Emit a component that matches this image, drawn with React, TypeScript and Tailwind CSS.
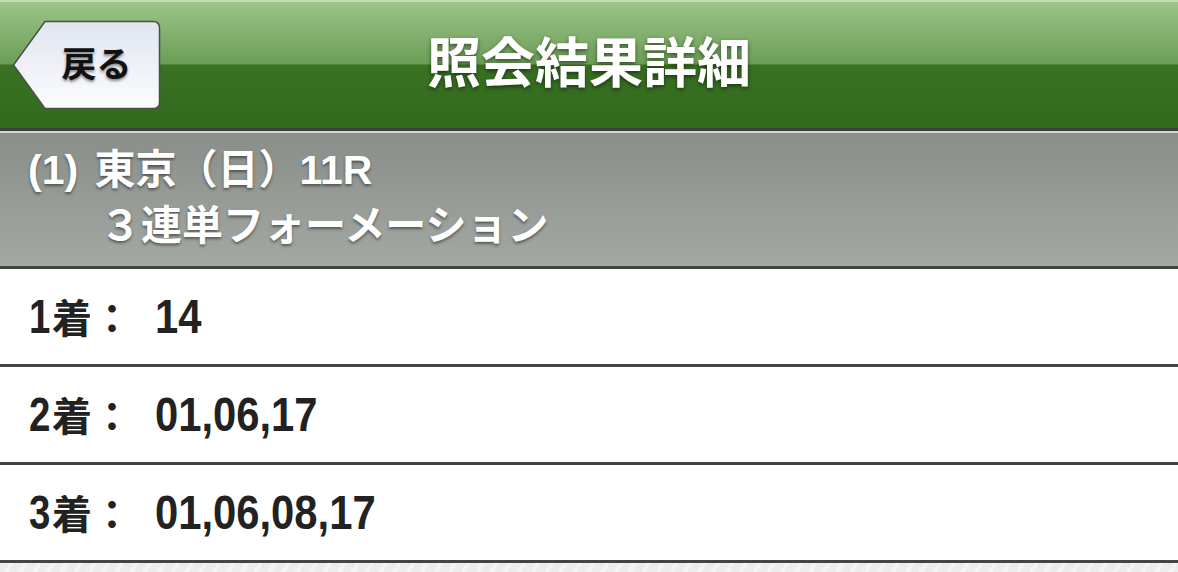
const font = { fontFamily: '"Liberation Sans", "Noto Sans CJK JP", sans-serif' };

const rows = [
  { place: "1", value: "14" },
  { place: "2", value: "01,06,17" },
  { place: "3", value: "01,06,08,17" },
];

function BackButton() {
  return (
    <button className="relative ml-[12px] h-[90px] w-[149px] cursor-pointer">
      <svg className="absolute inset-0" width="149" height="90" viewBox="0 0 149 90">
        <defs>
          <linearGradient id="backFill" x1="0" y1="0" x2="0" y2="1">
            <stop offset="0" stopColor="#dfe4ee" />
            <stop offset="1" stopColor="#fdfdff" />
          </linearGradient>
        </defs>
        <path
          d="M33 1.5 H141 Q147.5 1.5 147.5 8 V82 Q147.5 88.5 141 88.5 H33 L1.5 45 Z"
          fill="url(#backFill)"
          stroke="#4a4f4a"
          strokeWidth="1.5"
        />
      </svg>
      <span
        className="relative block pl-[20px] text-[35px] font-bold leading-[88px] text-[#111] [text-shadow:0_2px_3px_rgba(0,0,0,0.45)]"
        style={font}
      >
        戻る
      </span>
    </button>
  );
}

export default function App() {
  return (
    <div className="flex h-[572px] w-[1178px] flex-col overflow-hidden bg-white" style={font}>
      {/* header bar */}
      <div className="border-t-[2px] border-[#c4dcb0] bg-[linear-gradient(to_bottom,#9cc38a_0px,#6c9e56_62px,#397223_63px,#326a1d_126px)]">
        <div className="grid h-[126px] grid-cols-[1fr_auto_1fr] items-center">
          <div className="flex items-center">
            <BackButton />
          </div>
          <h1 className="-mt-[3px] text-[54px] font-bold leading-none text-white [text-shadow:0_2px_4px_rgba(0,0,0,0.5)]">
            照会結果詳細
          </h1>
          <div />
        </div>
      </div>
      <div className="h-[3px] bg-[#3d3f3d]" />
      <div className="h-[2px] bg-[#d2d6d2]" />

      {/* race info */}
      <div className="flex h-[133px] flex-col bg-[linear-gradient(to_bottom,#8a8e8a,#a3a8a3)] pl-[28px] pt-[10px] font-bold text-white [text-shadow:0_2px_3px_rgba(0,0,0,0.45)]">
        <div className="text-[41px] leading-[54px]">
          (1) <span className="ml-[5px]">東京（日）11R</span>
        </div>
        <div className="pl-[72px] pt-[4px] text-[41px] leading-[50px]">３連単フォーメーション</div>
      </div>

      {/* bet rows */}
      {rows.map((r) => (
        <div key={r.place} className="flex h-[98px] items-center border-t-[3px] border-[#444] bg-white pl-[29px] font-bold text-[#222]">
          <span className="flex w-[126px] items-baseline">
            <span className="inline-block w-[23px] origin-left scale-x-[0.8] text-[48px]">{r.place}</span>
            <span className="text-[40px]">着：</span>
          </span>
          <span className="inline-block origin-left scale-x-[0.87] text-[48px]">{r.value}</span>
        </div>
      ))}
      <div className="flex-1 border-t-[3px] border-[#444] bg-[repeating-linear-gradient(120deg,#ececec_0px,#ececec_8px,#f4f4f4_8px,#f4f4f4_12px)]" />
    </div>
  );
}
